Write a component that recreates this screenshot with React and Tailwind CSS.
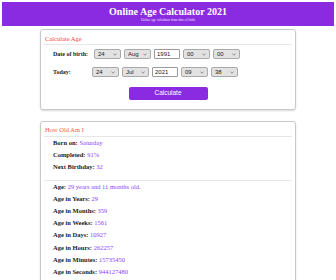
import React from 'react'

const serif = { fontFamily: '"Liberation Serif", "Times New Roman", serif' }

const Chevron = () => (
  <svg width="4" height="3" viewBox="0 0 4 3" className="shrink-0">
    <path d="M0.5 0.8 L2 2.2 L3.5 0.8" fill="none" stroke="#555" strokeWidth="0.6" />
  </svg>
)

const Select = ({ value, w = 'w-[27px]' }) => (
  <div className={`${w} h-[10px] flex items-center justify-between px-[3px] bg-[#e2e2e2] border border-[#a9a9a9] rounded-[2px] text-[6px] leading-none text-[#222] font-['Liberation_Sans',Arial,sans-serif]`}>
    <span>{value}</span>
    <Chevron />
  </div>
)

const YearInput = ({ value }) => (
  <div className="w-[26px] h-[10px] flex items-center px-[2px] bg-white border border-[#9a9a9a] rounded-[1px] text-[6px] leading-none text-[#222] font-['Liberation_Sans',Arial,sans-serif]">
    {value}
  </div>
)

const DateRow = ({ label, labelW, day, month, year, hour, min }) => (
  <div className="flex items-center pl-[12px] h-[10px]">
    <span className={`${labelW} text-[6px] font-bold text-[#222] leading-none`}>{label}</span>
    <div className="flex items-center gap-[3px]">
      <Select value={day} />
      <Select value={month} />
      <YearInput value={year} />
      <Select value={hour} />
      <Select value={min} />
    </div>
  </div>
)

const Line = ({ label, value }) => (
  <div className="pl-[12px] h-[12.2px] leading-[12.2px] text-[6.5px] whitespace-nowrap">
    <span className="font-bold text-[#222]">{label}</span>{' '}
    <span className="text-[#8a3ffc]">{value}</span>
  </div>
)

export default function App() {
  return (
    <div className="w-[336px] h-[280px] overflow-hidden bg-white" style={serif}>
      {/* header */}
      <div className="mx-[2px] mt-[2px] h-[24px] bg-[#8a2be2] flex flex-col items-center pt-[5px]">
        <div className="text-[10px] leading-[10px] font-bold text-white">Online Age Calculator 2021</div>
        <div className="mt-[1px] text-[3.4px] leading-[4px] text-[#f0e0ff]">Online age calculator from date of birth</div>
      </div>

      {/* calculate card */}
      <div className="mx-[40px] mt-[3px] h-[81px] border border-[#c9c9c9] rounded-[3px] shadow-[0_1px_2px_rgba(0,0,0,0.15)] bg-white">
        <div className="pl-[4px] pt-[5px] text-[6.5px] leading-[8px] text-[#ff4040]">Calculate Age</div>
        <div className="mx-[3px] mt-[1px] h-px bg-[#e6e6e6]" />
        <div className="mt-[4px]">
          <DateRow label="Date of birth:" labelW="w-[41px]" day="24" month="Aug" year="1991" hour="00" min="00" />
        </div>
        <div className="mt-[8px]">
          <DateRow label="Today:" labelW="w-[39px]" day="24" month="Jul" year="2021" hour="09" min="38" />
        </div>
        <div className="mt-[10px] flex justify-center">
          <button className="w-[79px] h-[13px] bg-[#8a2be2] rounded-[2px] text-white text-[6.5px] leading-none font-['Liberation_Sans',Arial,sans-serif]">
            Calculate
          </button>
        </div>
      </div>

      {/* result card */}
      <div className="mx-[40px] mt-[11px] h-[200px] border border-[#c9c9c9] rounded-[3px] shadow-[0_1px_2px_rgba(0,0,0,0.15)] bg-white">
        <div className="pl-[4px] pt-[4px] text-[6.5px] leading-[8px] text-[#ff5a3c]">How Old Am I</div>
        <div className="mx-[3px] mt-[2px] h-px bg-[#e6e6e6]" />
        <Line label="Born on:" value="Saturday" />
        <Line label="Completed:" value="91%" />
        <Line label="Next Birthday:" value="32" />
        <div className="mx-[3px] mt-[6px] h-px bg-[#e6e6e6]" />
        <Line label="Age:" value="29 years and 11 months old." />
        <Line label="Age in Years:" value="29" />
        <Line label="Age in Months:" value="359" />
        <Line label="Age in Weeks:" value="1561" />
        <Line label="Age in Days:" value="10927" />
        <Line label="Age in Hours:" value="262257" />
        <Line label="Age in Minutes:" value="15735450" />
        <Line label="Age in Seconds:" value="944127480" />
      </div>
    </div>
  )
}
